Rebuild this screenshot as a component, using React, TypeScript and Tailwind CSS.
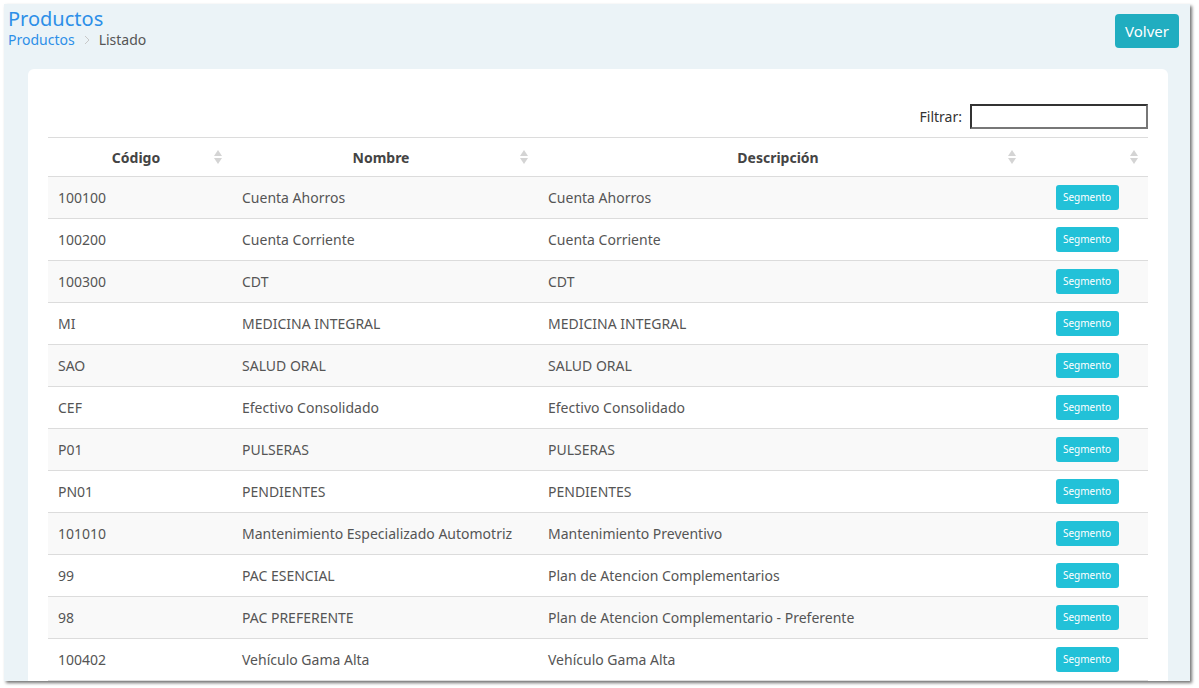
import React from 'react';

const rows: [string, string, string][] = [
  ['100100', 'Cuenta Ahorros', 'Cuenta Ahorros'],
  ['100200', 'Cuenta Corriente', 'Cuenta Corriente'],
  ['100300', 'CDT', 'CDT'],
  ['MI', 'MEDICINA INTEGRAL', 'MEDICINA INTEGRAL'],
  ['SAO', 'SALUD ORAL', 'SALUD ORAL'],
  ['CEF', 'Efectivo Consolidado', 'Efectivo Consolidado'],
  ['P01', 'PULSERAS', 'PULSERAS'],
  ['PN01', 'PENDIENTES', 'PENDIENTES'],
  ['101010', 'Mantenimiento Especializado Automotriz', 'Mantenimiento Preventivo'],
  ['99', 'PAC ESENCIAL', 'Plan de Atencion Complementarios'],
  ['98', 'PAC PREFERENTE', 'Plan de Atencion Complementario - Preferente'],
  ['100402', 'Vehículo Gama Alta', 'Vehículo Gama Alta'],
];

const SortIcon = () => (
  <svg width="8" height="14" viewBox="0 0 8 14" className="shrink-0">
    <path d="M4 0 L8 6 H0 Z" fill="#d4d4d4" />
    <path d="M0 8 H8 L4 14 Z" fill="#d4d4d4" />
  </svg>
);

const App: React.FC = () => {
  return (
    <div className="w-[1199px] h-[688px] bg-white overflow-hidden [font-family:'Liberation_Sans',Arial,sans-serif]">
      <div className="ml-[4px] mt-[4px] w-[1186px] h-[677px] bg-[#ebf3f7] shadow-[2px_2px_3px_rgba(0,0,0,0.55)] overflow-hidden">
        {/* Header */}
        <div className="flex justify-between items-start pl-[4px] pr-[11px] pt-[4px]">
          <div>
            <h1 className="text-[20px] leading-[22px] text-[#2d8fe8]">Productos</h1>
            <div className="flex items-center gap-[8px] text-[14px] leading-[20px]">
              <span className="text-[#2d8fe8]">Productos</span>
              <svg width="8" height="10" viewBox="0 0 8 10"><path d="M2 1 L6 5 L2 9" stroke="#c8c8c8" fill="none" strokeWidth="1" /></svg>
              <span className="text-[#555]">Listado</span>
            </div>
          </div>
          <button className="mt-[6px] h-[34px] w-[64px] rounded-[4px] bg-[#20adc0] text-white text-[15px]">Volver</button>
        </div>

        {/* Card */}
        <div className="ml-[24px] mt-[19px] w-[1140px] bg-white rounded-[6px] px-[20px] pt-[35px] pb-[40px]">
          <div className="flex justify-end items-center gap-[8px] h-[25px] text-[14px] text-[#333]">
            <span>Filtrar:</span>
            <input className="w-[178px] h-[25px] border-2 border-[#333] border-b-[#777] border-r-[#777] outline-none" />
          </div>
          <table className="mt-[8px] w-full border-collapse text-[14px] text-[#555]">
            <thead>
              <tr className="h-[39px] border-t border-b border-[#dcdcdc]">
                {[['Código', 184], ['Nombre', 306], ['Descripción', 488], ['', 122]].map(([h, w]) => (
                  <th key={h as string} style={{ width: w as number }} className="font-bold text-[#444] px-[10px]">
                    <div className="flex items-center justify-between">
                      <span className="flex-1 text-center">{h}</span>
                      <SortIcon />
                    </div>
                  </th>
                ))}
              </tr>
            </thead>
            <tbody>
              {rows.map((r, i) => (
                <tr key={r[0]} className={`h-[42px] border-b border-[#dcdcdc] ${i % 2 === 0 ? 'bg-[#f9f9f9]' : 'bg-white'}`}>
                  <td className="px-[10px]">{r[0]}</td>
                  <td className="px-[10px]">{r[1]}</td>
                  <td className="px-[10px]">{r[2]}</td>
                  <td className="px-[10px]">
                    <div className="flex justify-center">
                      <button className="h-[25px] w-[63px] rounded-[3px] bg-[#22c1d8] text-white text-[10px]">Segmento</button>
                    </div>
                  </td>
                </tr>
              ))}
            </tbody>
          </table>
        </div>
      </div>
    </div>
  );
};

export default App;
